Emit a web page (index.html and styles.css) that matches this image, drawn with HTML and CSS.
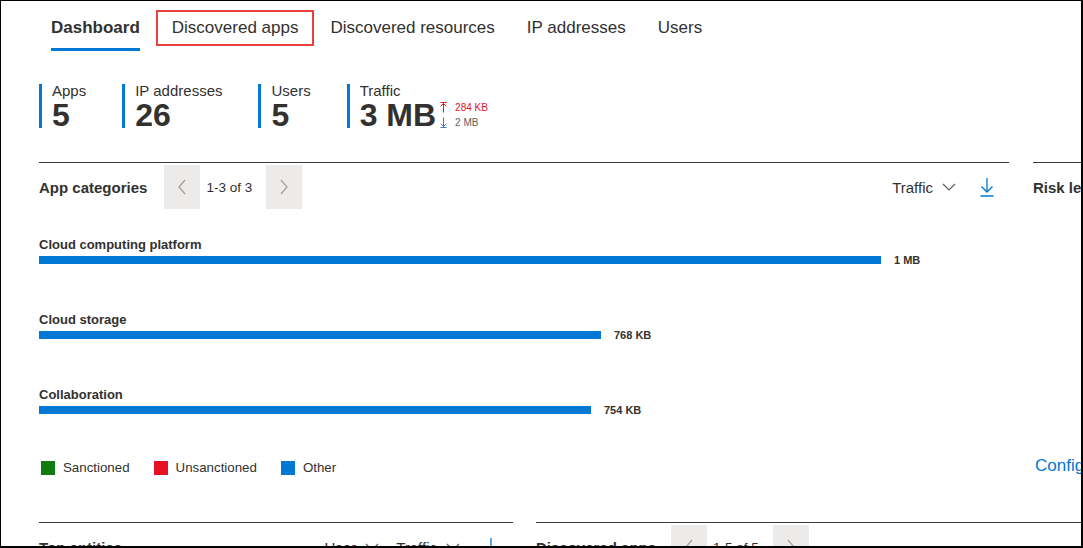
FILE: index.html
```html
<!DOCTYPE html>
<html lang="en">
<head>
<meta charset="utf-8">
<title>Dashboard</title>
<link rel="stylesheet" href="styles.css">
</head>
<body>
<div class="frame">
  <nav class="tabs">
    <div class="tab active">Dashboard</div>
    <div class="tab marked">Discovered apps</div>
    <div class="tab">Discovered resources</div>
    <div class="tab">IP addresses</div>
    <div class="tab">Users</div>
  </nav>

  <main class="content">
    <section class="stats">
      <div class="stat">
        <div class="stat-label">Apps</div>
        <div class="stat-value">5</div>
      </div>
      <div class="stat">
        <div class="stat-label">IP addresses</div>
        <div class="stat-value">26</div>
      </div>
      <div class="stat">
        <div class="stat-label">Users</div>
        <div class="stat-value">5</div>
      </div>
      <div class="stat">
        <div class="stat-label">Traffic</div>
        <div class="stat-row">
          <div class="stat-value">3 MB</div>
          <div class="deltas">
            <div class="delta up">
              <svg class="delta-icon" width="7" height="11" viewBox="0 0 7 11"><path d="M0.5 0.5H6.5M3.5 1.5V10.5M0.7 4.3L3.5 1.5L6.3 4.3" fill="none" stroke="#e81123" stroke-width="1"/></svg>
              <span>284 KB</span>
            </div>
            <div class="delta down">
              <svg class="delta-icon" width="7" height="11" viewBox="0 0 7 11"><path d="M3.5 0.5V9.5M0.7 6.7L3.5 9.5L6.3 6.7M0.5 10.5H6.5" fill="none" stroke="#3a7cc4" stroke-width="1"/></svg>
              <span>2 MB</span>
            </div>
          </div>
        </div>
      </div>
    </section>

    <section class="cards top-cards">
      <div class="card card-categories">
        <header class="card-head">
          <h2 class="card-title">App categories</h2>
          <div class="pager">
            <button class="pg-btn" type="button"><svg width="8" height="16" viewBox="0 0 8 16"><polyline points="7,1 1,8 7,15" fill="none" stroke="#a19f9d" stroke-width="1.2"/></svg></button>
            <span class="pg-text">1-3 of 3</span>
            <button class="pg-btn" type="button"><svg width="8" height="16" viewBox="0 0 8 16"><polyline points="1,1 7,8 1,15" fill="none" stroke="#a19f9d" stroke-width="1.2"/></svg></button>
          </div>
          <div class="head-tools">
            <span class="dropdown">Traffic<svg class="chev" width="14" height="8" viewBox="0 0 14 8"><polyline points="1,1 7,7 13,1" fill="none" stroke="#605e5c" stroke-width="1.2"/></svg></span>
            <svg class="download" width="14" height="19" viewBox="0 0 14 19"><path d="M7 0V14M1.5 8.5L7 14L12.5 8.5M0.5 18H13.5" fill="none" stroke="#0078d4" stroke-width="1.3"/></svg>
          </div>
        </header>

        <div class="bars">
          <div class="bar-row">
            <div class="bar-label">Cloud computing platform</div>
            <div class="bar-line"><div class="bar" style="width:842px"></div><span class="bar-value">1 MB</span></div>
          </div>
          <div class="bar-row">
            <div class="bar-label">Cloud storage</div>
            <div class="bar-line"><div class="bar" style="width:562px"></div><span class="bar-value">768 KB</span></div>
          </div>
          <div class="bar-row">
            <div class="bar-label">Collaboration</div>
            <div class="bar-line"><div class="bar" style="width:552px"></div><span class="bar-value">754 KB</span></div>
          </div>
        </div>

        <div class="legend">
          <div class="legend-item"><span class="swatch sanctioned"></span>Sanctioned</div>
          <div class="legend-item"><span class="swatch unsanctioned"></span>Unsanctioned</div>
          <div class="legend-item"><span class="swatch other"></span>Other</div>
        </div>
      </div>

      <div class="card card-risk">
        <header class="card-head">
          <h2 class="card-title">Risk levels</h2>
        </header>
        <a class="config-link">Configure score metrics</a>
      </div>
    </section>

    <section class="cards bottom-cards">
      <div class="card card-entities">
        <header class="card-head">
          <h2 class="card-title">Top entities</h2>
          <div class="head-tools">
            <span class="dropdown">User<svg class="chev" width="14" height="8" viewBox="0 0 14 8"><polyline points="1,1 7,7 13,1" fill="none" stroke="#605e5c" stroke-width="1.2"/></svg></span>
            <span class="dropdown">Traffic<svg class="chev" width="14" height="8" viewBox="0 0 14 8"><polyline points="1,1 7,7 13,1" fill="none" stroke="#605e5c" stroke-width="1.2"/></svg></span>
            <svg class="download" width="14" height="19" viewBox="0 0 14 19"><path d="M7 0V14M1.5 8.5L7 14L12.5 8.5M0.5 18H13.5" fill="none" stroke="#0078d4" stroke-width="1.3"/></svg>
          </div>
        </header>
      </div>
      <div class="card card-apps">
        <header class="card-head">
          <h2 class="card-title">Discovered apps</h2>
          <div class="pager">
            <button class="pg-btn" type="button"><svg width="8" height="16" viewBox="0 0 8 16"><polyline points="7,1 1,8 7,15" fill="none" stroke="#a19f9d" stroke-width="1.2"/></svg></button>
            <span class="pg-text">1-5 of 5</span>
            <button class="pg-btn" type="button"><svg width="8" height="16" viewBox="0 0 8 16"><polyline points="1,1 7,8 1,15" fill="none" stroke="#a19f9d" stroke-width="1.2"/></svg></button>
          </div>
        </header>
      </div>
    </section>
  </main>
</div>
</body>
</html>
```

FILE: styles.css
```css
* { box-sizing: border-box; }

html, body {
  margin: 0;
  padding: 0;
  background: #ffffff;
}

body {
  font-family: "Liberation Sans", Arial, sans-serif;
  color: #323130;
}

.frame {
  width: 1083px;
  height: 548px;
  border-style: solid;
  border-color: #000000;
  border-width: 1px 2px 2px 1px;
  overflow: hidden;
  background: #ffffff;
}

/* Tabs */
.tabs {
  display: flex;
  padding: 9px 0 0 34px;
}

.tab {
  position: relative;
  display: flex;
  align-items: center;
  height: 36px;
  padding: 0 16px;
  font-size: 17px;
  color: #323130;
  white-space: nowrap;
}

.tab.active {
  font-weight: bold;
}

.tab.active::after {
  content: "";
  position: absolute;
  left: 16px;
  right: 16px;
  bottom: -5px;
  height: 3px;
  background: #0078d4;
}

.tab.marked {
  box-shadow: inset 0 0 0 2px #e8413f;
}

/* Content */
.content {
  padding-left: 38px;
}

.stats {
  display: flex;
  margin-top: 38px;
}

.stat {
  border-left: 3px solid #0078d4;
  padding-left: 10px;
  margin-right: 36px;
  height: 44px;
}

.stat-label {
  font-size: 15px;
  line-height: 14px;
  white-space: nowrap;
}

.stat-value {
  font-size: 32px;
  line-height: 30px;
  font-weight: bold;
  white-space: nowrap;
}

.stat-row,
.stat > .stat-value {
  margin-top: 2px;
}

.stat-row {
  display: flex;
  align-items: center;
}

.deltas {
  margin-left: 4px;
  display: flex;
  flex-direction: column;
}

.delta {
  display: flex;
  align-items: center;
  height: 15px;
  font-size: 10px;
  white-space: nowrap;
}

.delta-icon {
  margin-right: 8px;
}

.delta.up { color: #e81123; }
.delta.down { color: #605e5c; }

/* Cards */
.cards {
  display: flex;
}

.top-cards {
  margin-top: 34px;
  gap: 24px;
}

.bottom-cards {
  margin-top: 24px;
  gap: 23px;
}

.card {
  flex: none;
  border-top: 1px solid #3b3a39;
}

.card-categories {
  width: 970px;
  padding-bottom: 22px;
}

.card-risk {
  width: 300px;
  display: flex;
  flex-direction: column;
  padding-bottom: 22px;
}

.card-entities { width: 474px; }
.card-apps { width: 600px; }

.card-head {
  display: flex;
  align-items: center;
  height: 44px;
  margin-top: 2px;
}

.card-title {
  margin: 0 17px 0 0;
  font-size: 15px;
  font-weight: bold;
  color: #323130;
  white-space: nowrap;
}

.card-apps .card-title {
  margin-right: 15px;
}

.pager {
  display: flex;
  align-items: center;
}

.pg-btn {
  width: 36px;
  height: 44px;
  padding: 0;
  border: none;
  background: #edebe9;
  display: flex;
  align-items: center;
  justify-content: center;
}

.pg-text {
  margin: 0 14px 0 6px;
  font-size: 13.5px;
  white-space: nowrap;
}

.head-tools {
  margin-left: auto;
  padding-right: 15px;
  display: flex;
  align-items: center;
}

.dropdown {
  display: flex;
  align-items: center;
  font-size: 15px;
  white-space: nowrap;
  margin-right: 17px;
}

.dropdown:last-of-type {
  margin-right: 24px;
}

.chev {
  margin-left: 9px;
}

.download {
  display: block;
}

/* Bars */
.bars {
  margin-top: 28px;
}

.bar-row {
  margin-bottom: 48px;
}

.bar-row:last-child {
  margin-bottom: 0;
}

.bar-label {
  font-size: 13px;
  line-height: 16px;
  font-weight: bold;
  margin-bottom: 3px;
}

.bar-line {
  display: flex;
  align-items: center;
  height: 8px;
}

.bar {
  height: 8px;
  background: #0078d4;
}

.bar-value {
  margin-left: 13px;
  font-size: 11px;
  line-height: 13px;
  font-weight: bold;
  white-space: nowrap;
}

/* Legend */
.legend {
  display: flex;
  align-items: center;
  margin-top: 46px;
  padding-left: 2px;
  height: 16px;
}

.legend-item {
  display: flex;
  align-items: center;
  font-size: 13.3px;
  line-height: 16px;
  margin-right: 24px;
}

.swatch {
  width: 14px;
  height: 14px;
  margin-right: 8px;
}

.swatch.sanctioned { background: #107c10; }
.swatch.unsanctioned { background: #e81123; }
.swatch.other { background: #0078d4; }

.config-link {
  margin-top: auto;
  margin-left: 2px;
  font-size: 17px;
  line-height: 20px;
  color: #0078d4;
  white-space: nowrap;
}
```
